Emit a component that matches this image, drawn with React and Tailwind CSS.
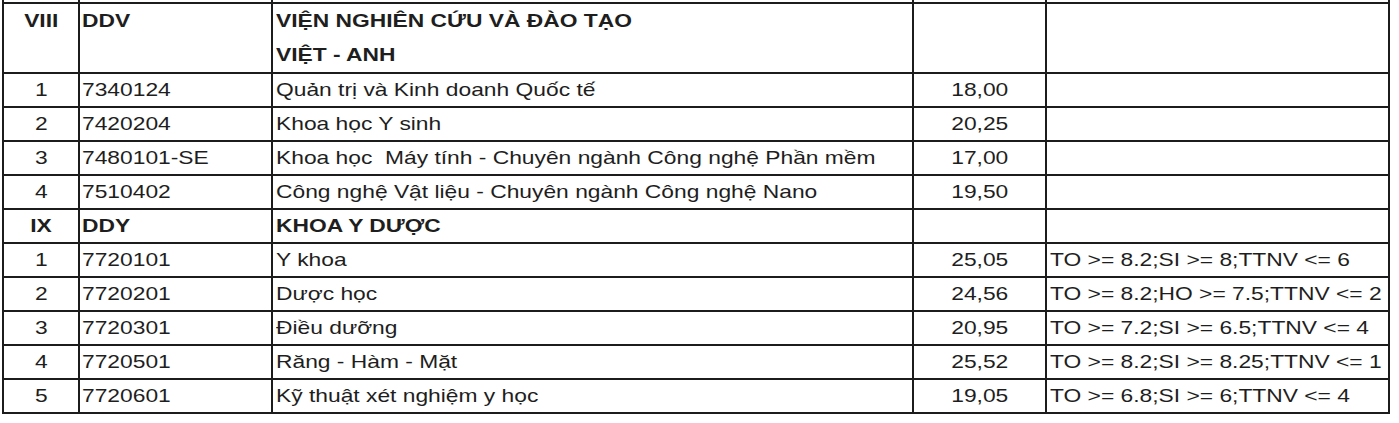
import React from "react";

const rows = [
  { kind: "group", a: "VIII", b: "DDV", c: ["VIỆN NGHIÊN CỨU VÀ ĐÀO TẠO", "VIỆT - ANH"], d: "", e: "" },
  { a: "1", b: "7340124", c: "Quản trị và Kinh doanh Quốc tế", d: "18,00", e: "" },
  { a: "2", b: "7420204", c: "Khoa học Y sinh", d: "20,25", e: "" },
  { a: "3", b: "7480101-SE", c: "Khoa học  Máy tính - Chuyên ngành Công nghệ Phần mềm", d: "17,00", e: "" },
  { a: "4", b: "7510402", c: "Công nghệ Vật liệu - Chuyên ngành Công nghệ Nano", d: "19,50", e: "" },
  { kind: "group1", a: "IX", b: "DDY", c: "KHOA Y DƯỢC", d: "", e: "" },
  { a: "1", b: "7720101", c: "Y khoa", d: "25,05", e: "TO >= 8.2;SI >= 8;TTNV <= 6" },
  { a: "2", b: "7720201", c: "Dược học", d: "24,56", e: "TO >= 8.2;HO >= 7.5;TTNV <= 2" },
  { a: "3", b: "7720301", c: "Điều dưỡng", d: "20,95", e: "TO >= 7.2;SI >= 6.5;TTNV <= 4" },
  { a: "4", b: "7720501", c: "Răng - Hàm - Mặt", d: "25,52", e: "TO >= 8.2;SI >= 8.25;TTNV <= 1" },
  { a: "5", b: "7720601", c: "Kỹ thuật xét nghiệm y học", d: "19,05", e: "TO >= 6.8;SI >= 6;TTNV <= 4" },
];

function L({ children }) {
  return <span className="inline-block origin-left scale-x-120 whitespace-pre">{children}</span>;
}
function C({ children }) {
  return <span className="inline-block origin-center scale-x-120 whitespace-pre">{children}</span>;
}

const td = "border-2 border-[#1c1c1c] p-0 h-[34px] leading-[20px] align-middle";

export default function App() {
  return (
    <div className="bg-white w-[1399px] h-[423px] overflow-hidden font-['Liberation_Sans',Arial,sans-serif] text-[19px] text-[#1e1e1e]">
      <table className="table-fixed border-collapse ml-[2px] w-[1388px]">
        <colgroup>
          <col className="w-[76px]" />
          <col className="w-[193px]" />
          <col className="w-[641px]" />
          <col className="w-[133px]" />
          <col className="w-[343px]" />
        </colgroup>
        <tbody>
          <tr>
            <td className="border-2 border-t-0 border-[#1c1c1c] p-0 h-[3px]"></td>
            <td className="border-2 border-t-0 border-[#1c1c1c] p-0 h-[3px]"></td>
            <td className="border-2 border-t-0 border-[#1c1c1c] p-0 h-[3px]"></td>
            <td className="border-2 border-t-0 border-[#1c1c1c] p-0 h-[3px]"></td>
            <td className="border-2 border-t-0 border-[#1c1c1c] p-0 h-[3px]"></td>
          </tr>
          {rows.map((r, i) => {
            if (r.kind === "group") {
              const g = "border-2 border-[#1c1c1c] p-0 h-[67px] align-top leading-[34px] font-bold";
              return (
                <tr key={i}>
                  <td className={g + " text-center"}><C>{r.a}</C></td>
                  <td className={g + " pl-[2px]"}><L>{r.b}</L></td>
                  <td className={g + " pl-[3px]"}>
                    <div><L>{r.c[0]}</L></div>
                    <div><L>{r.c[1]}</L></div>
                  </td>
                  <td className={g}></td>
                  <td className={g}></td>
                </tr>
              );
            }
            const bold = r.kind === "group1" ? " font-bold" : "";
            return (
              <tr key={i}>
                <td className={td + " text-center" + bold}><C>{r.a}</C></td>
                <td className={td + " pl-[2px]" + bold}><L>{r.b}</L></td>
                <td className={td + " pl-[3px]" + bold}><L>{r.c}</L></td>
                <td className={td + " text-center"}><C>{r.d}</C></td>
                <td className={td + " pl-[3px]"}><L>{r.e}</L></td>
              </tr>
            );
          })}
        </tbody>
      </table>
    </div>
  );
}
